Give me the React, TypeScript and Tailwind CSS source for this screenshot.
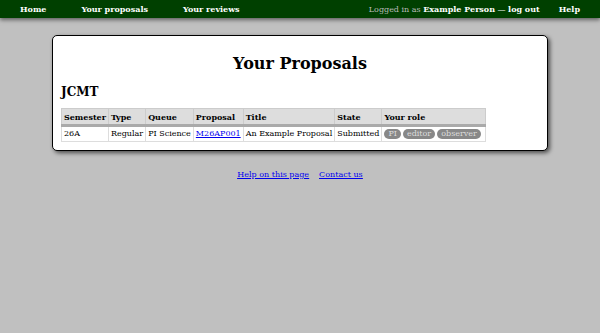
export default function App() {
  const th = 'border border-[#cccccc] bg-[#dddddd] px-[2px] pt-[2px] pb-[1px] leading-[12px] text-left font-bold border-b-[3px] border-b-[#aaaaaa]';
  const td = 'border border-[#dddddd] px-[2px] py-[1px] leading-[12px]';
  const badge = 'inline-block rounded-full bg-[#888888] text-[#dddddd] px-[4px] leading-[10px] mr-[2px]';
  return (
    <div className="min-h-[333px] bg-[#c0c0c0] font-['DejaVu_Serif',serif] text-[8px] text-black">
      <div className="flex h-[18px] items-center bg-[#004000] text-white font-bold shadow-[0_2px_4px_rgba(0,0,0,0.5)]">
        <span className="ml-[20px]">Home</span>
        <span className="ml-[35px]">Your proposals</span>
        <span className="ml-[35px]">Your reviews</span>
        <span className="ml-auto font-normal text-[#bbbbbb]">
          Logged in as <b className="text-white">Example Person</b> <span className="text-white">&mdash;</span> <b className="text-white">log out</b>
        </span>
        <span className="ml-[19px] mr-[20px]">Help</span>
      </div>
      <div className="mx-[52px] mt-[17px] rounded-[5px] border border-black bg-white px-[8px] pb-[8px] pt-[18px] shadow-[2px_2px_4px_rgba(0,0,0,0.6)]">
        <h1 className="text-center text-[16px] font-bold leading-[20px]">Your Proposals</h1>
        <h2 className="mt-[11px] text-[12px] font-bold leading-[14px]">JCMT</h2>
        <table className="mt-[9px] border-collapse">
          <thead>
            <tr>
              <th className={th}>Semester</th>
              <th className={th}>Type</th>
              <th className={th}>Queue</th>
              <th className={th}>Proposal</th>
              <th className={th}>Title</th>
              <th className={th}>State</th>
              <th className={th}>Your role</th>
            </tr>
          </thead>
          <tbody>
            <tr>
              <td className={td}>26A</td>
              <td className={td}>Regular</td>
              <td className={td}>PI Science</td>
              <td className={td}><a className="text-[#0000ee] underline">M26AP001</a></td>
              <td className={td}>An Example Proposal</td>
              <td className={td}>Submitted</td>
              <td className={td}>
                <span className={badge}>PI</span>
                <span className={badge}>editor</span>
                <span className={badge}>observer</span>
              </td>
            </tr>
          </tbody>
        </table>
      </div>
      <div className="mt-[18px] flex justify-center gap-[10px] text-[#0000ee] underline">
        <a>Help on this page</a>
        <a>Contact us</a>
      </div>
    </div>
  );
}
